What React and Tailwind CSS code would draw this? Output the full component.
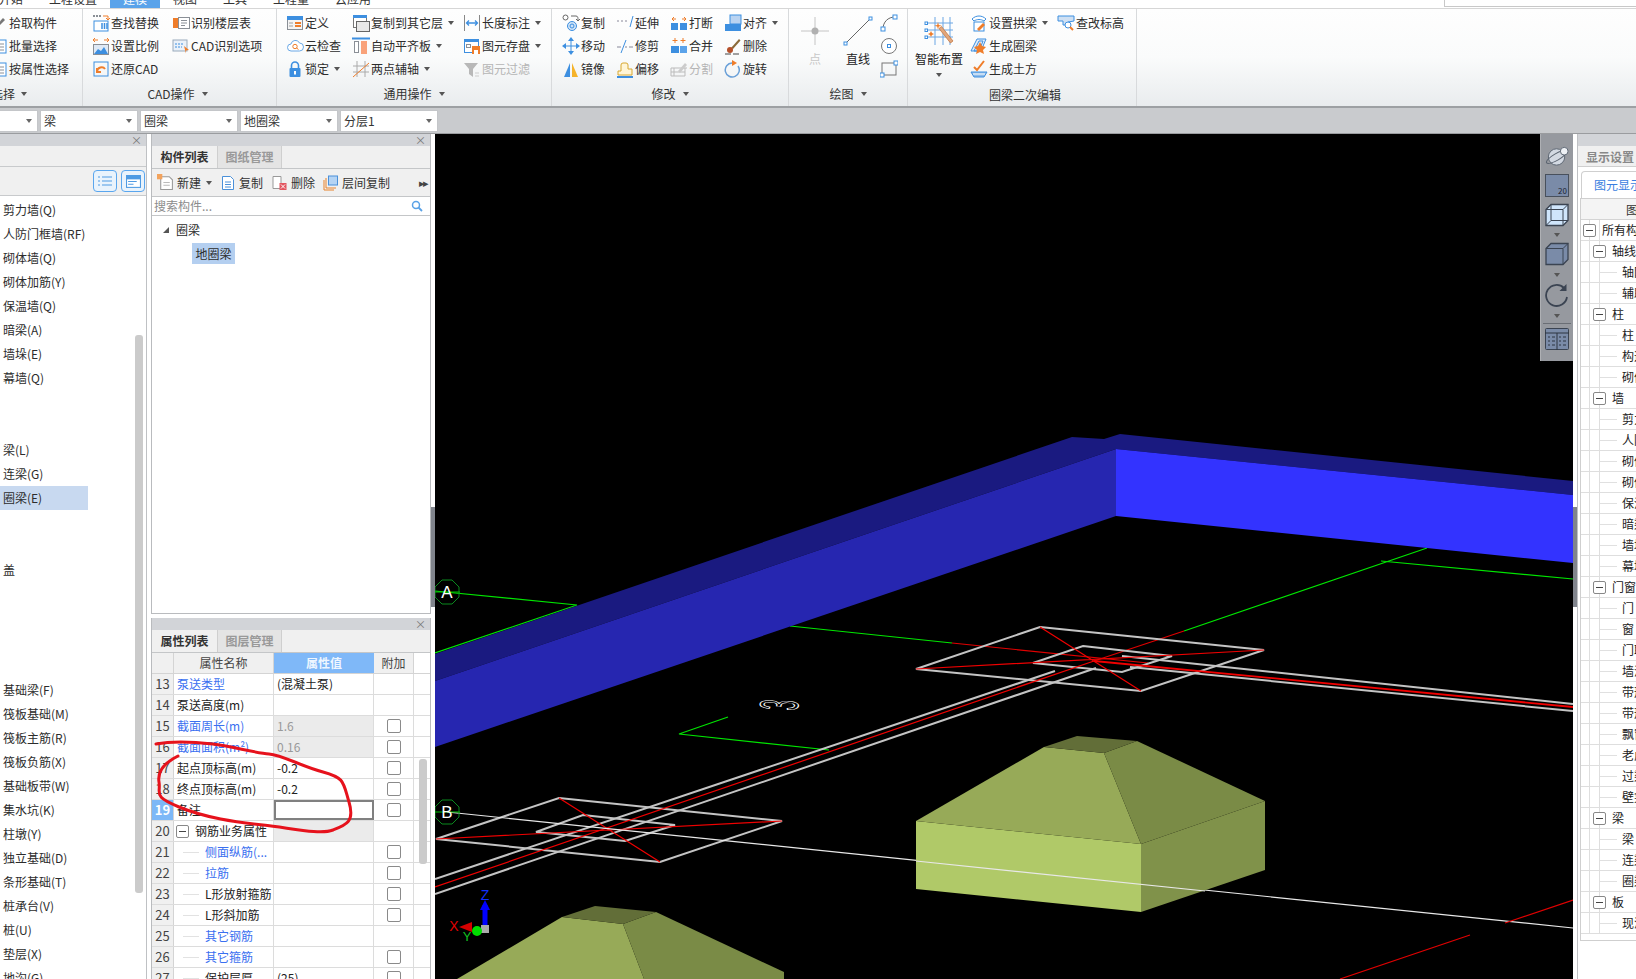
import React from "react";

const FONT = "font-['Noto_Sans_CJK_SC','Noto_Sans',sans-serif]";

const S = ({ children }) => (
  <svg viewBox="0 0 18 18" width="18" height="18" fill="none" className="block shrink-0">{children}</svg>
);
const B = "#3d8fe0";
const O = "#ef7d2a";
const G = "#8a8f96";

const Icons = {
  pick: <S><path d="M3 15 L13 4 L15 6 L5 16Z" fill="#777" /></S>,
  doc: <S><rect x="3" y="3" width="13" height="13" fill="#fff" stroke={B} /><path d="M6 7h8M6 10h8M6 13h8" stroke={G} /></S>,
  find: <S><path d="M1 2h2M4 2h2M7 2h2" stroke={G} strokeWidth="2" /><path d="M11 2h5v3M14 4l2 2 2-2" stroke={O} /><rect x="2" y="7" width="14" height="10" fill="#fff" stroke={B} /><path d="M10 9v6M12.500 9v6M15 9v6" stroke={B} strokeWidth="1.500" /></S>,
  scale: <S><path d="M1 3h5M1 3l2-2M1 3l2 2M17 3h-5M17 3l-2-2M17 3l-2 2" stroke={O} /><rect x="1.500" y="7.500" width="15" height="10" fill="#dfe9f5" stroke={G} /><path d="M2 17l4-5 3 2 3-4 4 7z" fill={B} /></S>,
  restore: <S><rect x="2" y="2" width="14" height="14" stroke={B} /><path d="M5 12c0-5 6-6 8-3M5 8v4h4" stroke={O} strokeWidth="2" /></S>,
  floors: <S><rect x="1" y="4" width="7" height="10" fill={O} /><rect x="6.500" y="3.500" width="11" height="11" fill="#fff" stroke={G} /><path d="M9 6.500h6M9 9h6M9 11.500h4" stroke={G} /></S>,
  cad: <S><rect x="1" y="3" width="14" height="11" fill="#eaf1f9" stroke="#9ab" /><path d="M3 7h9M3 10h7" stroke={B} strokeDasharray="2 1" /><path d="M12 9l5 4-3 .5 0 3z" fill={O} /></S>,
  define: <S><rect x="1.500" y="2.500" width="15" height="13" fill="#f4f4f4" stroke={G} /><rect x="1" y="2" width="16" height="4" fill={B} /><path d="M9 9h6M9 12h6" stroke={O} strokeWidth="2" /><path d="M3 9h4M3 12h4" stroke="#bbb" strokeWidth="1.500" /></S>,
  cloud: <S><path d="M5 14a3.500 3.500 0 0 1 0-7 4.500 4.500 0 0 1 8.500-1 4 4 0 0 1 0 8z" fill="#fff" stroke="#6aa8e6" /><circle cx="9" cy="9.500" r="2.200" stroke={O} /><path d="M10.500 11l2 1.500" stroke={O} /></S>,
  lock: <S><path d="M5.500 8V5.500a3.500 3.500 0 0 1 7 0V8" stroke={B} strokeWidth="1.600" /><rect x="3.500" y="8" width="11" height="9" rx="1" fill={B} /><rect x="8" y="11" width="2" height="3.500" fill="#fff" /></S>,
  copyto: <S><rect x="1.500" y="1.500" width="13" height="12" fill="#fff" stroke="#777" /><rect x="1" y="1" width="14" height="3" fill={B} /><rect x="4.500" y="7.500" width="13" height="10" fill="#e8e8e8" stroke="#666" /></S>,
  align2: <S><path d="M0 1.500h18" stroke={B} strokeWidth="2" /><rect x="2.500" y="4.500" width="4" height="11" fill="#fff" stroke={G} /><rect x="9" y="4" width="6" height="13" fill="#f9a27a" /></S>,
  axis2: <S><path d="M5 1v16M13 1v16M1 6h16M1 12h16" stroke="#aaa" /><path d="M1 17L17 3" stroke={O} /></S>,
  dim: <S><path d="M1.500 1v16M16.500 1v16" stroke="#888" /><path d="M4 9h10M6 6.500L3.500 9 6 11.500M12 6.500L14.500 9 12 11.500" stroke={B} strokeWidth="1.300" /></S>,
  save: <S><rect x="1.500" y="2.500" width="14" height="13" fill="#fff" stroke={B} /><rect x="1" y="2" width="15" height="3" fill={B} /><rect x="3.500" y="7.500" width="4" height="3" stroke={G} /><rect x="9" y="9" width="8" height="8" fill={O} /><rect x="11" y="13" width="4" height="4" fill="#fff" /></S>,
  filter: <S><path d="M1 3h14L10 9v8L6 14V9z" fill="#b8b8b8" /><path d="M12 13h4M12 16h4" stroke="#ccc" /></S>,
  copy: <S><circle cx="3.500" cy="3.500" r="2.500" fill="#fff" stroke="#666" /><circle cx="10" cy="12" r="4.500" fill="#cfe3f7" stroke={B} /><circle cx="10" cy="12" r="2" stroke={B} /><path d="M9 2h5c2 0 2 2 2 4M14 5l2 2 2-2" stroke="#666" /></S>,
  extend: <S><path d="M1 7h2M5 7h2M9 7h2" stroke="#889" /><path d="M14 13l3-11" stroke={B} /></S>,
  breakI: <S><path d="M2 5h4M2 5l2-2M2 5l2 2M16 5h-4M16 5l-2-2M16 5l-2 2" stroke={O} /><rect x="1" y="9" width="7" height="7" fill={B} /><rect x="10" y="9" width="7" height="7" fill={B} /></S>,
  alignI: <S><rect x="6" y="1" width="11" height="9" fill="#b9d3f1" stroke={B} /><rect x="1" y="10" width="16" height="7" fill={B} /></S>,
  move: <S><path d="M9 3v12M3 9h12" stroke={B} /><path d="M9 0l3 4H6zM9 18l3-4H6zM0 9l4-3v6zM18 9l-4-3v6z" fill={B} /></S>,
  trim: <S><path d="M1 10h4M9 10h2M13 10h4" stroke="#889" /><path d="M5 16L10 3" stroke={B} /></S>,
  merge: <S><path d="M5 1v5M2.500 3.500h5M13 1v5M10.500 3.500h5" stroke={O} /><rect x="1" y="9" width="8" height="7" fill={B} /><rect x="10" y="9" width="7" height="7" fill="#5ba3ea" /></S>,
  del: <S><path d="M7 11L15 2l1.500 1.500L9 12z" fill="#8a6a3a" /><circle cx="6" cy="13" r="3" fill="#b5502a" /><path d="M1 17h6M9 17h6" stroke="#444" /></S>,
  mirror: <S><path d="M8 3v14H2z" fill={B} /><path d="M10 3v14h6z" fill="#f5b32a" /></S>,
  offset: <S><path d="M2 15v-4h3V5a2 2 0 0 1 2-2h3a2 2 0 0 1 2 2v4h4v6z" fill="#fff5d6" stroke="#d8a830" /><path d="M1 17h16" stroke={B} strokeWidth="2" /></S>,
  split: <S><path d="M1 8h13l3 0M1 8v8h14V8M4 8v8M1 12h14" stroke="#bbb" /><path d="M8 11l7-8 2 2-7 8z" fill="#ccc" /></S>,
  rotate: <S><path d="M8 3a7 7 0 1 0 6 3" stroke="#6aa0d8" strokeWidth="1.500" /><path d="M8 0v6l5-3z" fill={O} /></S>,
  arc: <S><path d="M3 15C3 8 8 3 15 3" stroke="#666" /><rect x="1" y="13" width="4" height="4" fill="#fff" stroke={B} /><rect x="13" y="1" width="4" height="4" fill="#fff" stroke={B} /></S>,
  circle: <S><circle cx="9" cy="9" r="7.500" stroke="#777" fill="#fff" /><rect x="7.500" y="7.500" width="3" height="3" fill="#fff" stroke={B} /></S>,
  rect: <S><rect x="2" y="3" width="14" height="12" stroke="#777" /><rect x="0" y="13" width="4" height="4" fill="#fff" stroke={B} /><rect x="14" y="1" width="4" height="4" fill="#fff" stroke={B} /></S>,
  arch: <S><path d="M2 5c4-4 10-4 14 0l-2 2c-3-2-7-2-10 0z" fill="#fff" stroke={B} /><rect x="4" y="8" width="10" height="9" fill="#fff" stroke={B} /><path d="M7 15l6-6 2 2-6 6z" fill={O} /></S>,
  ring: <S><path d="M1 14L7 2h9l-5 12zM4 14l5-10h4l-4 10z" stroke={B} fill="#e4eefa" /><path d="M10 5l2 4 4 1-3 3 1 4-4-2-4 2 1-4-3-3 4-1z" fill={O} /></S>,
  earth: <S><path d="M4 7l3 3 7-9" stroke={O} strokeWidth="2" /><path d="M1 12h16l-3 5H4z" fill="#8fbce9" stroke={B} /><path d="M3 14h12" stroke="#fff" /></S>,
  elev: <S><path d="M1 2h16v5l-6 1v3H6V7H1z" fill="#cfe0f3" stroke={B} /><circle cx="11" cy="11" r="3" fill="#fff" stroke={B} /><path d="M13 13l3 3" stroke={O} strokeWidth="2" /></S>,
  search: <svg viewBox="0 0 12 12" width="12" height="12" fill="none" className="block"><circle cx="5" cy="5" r="3.500" stroke="#5aa2e6" strokeWidth="1.500" /><path d="M7.500 7.500L11 11" stroke="#5aa2e6" strokeWidth="1.800" /></svg>,
};

const Caret = ({ cls = "ml-[5px]" }) => (
  <span className={"inline-block w-0 h-0 shrink-0 border-x-[3.5px] border-x-transparent border-t-[4px] border-t-[#555] " + cls} />
);

const Item = ({ icon, label, caret, gray }) => (
  <div className="flex items-center h-[23px] whitespace-nowrap">
    <span className="w-[19px] shrink-0">{Icons[icon]}</span>
    <span className={gray ? "text-[#b5b5b5]" : "text-[#2c2c2c]"}>{label}</span>
    {caret && <Caret />}
  </div>
);

const GroupLabel = ({ text, caret = true, cls = "" }) => (
  <div className={"flex items-center justify-center h-[16px] leading-[16px] whitespace-nowrap text-[#333] " + cls}>
    <span>{text}</span>
    {caret && <Caret cls="ml-[7px]" />}
  </div>
);

const Ribbon = () => (
  <div className="flex h-[98px] bg-gradient-to-b from-[#fefefe] via-[#fafbfb] to-[#e9ecee] border-t border-[#d6d6d6] text-[12px] leading-[16px]">
    <div className="w-[83px] shrink-0 pt-[2px] overflow-hidden border-r border-[#d8dadc]">
      <div className="h-[75px] flex flex-col -ml-[10px]">
        <Item icon="pick" label="拾取构件" />
        <Item icon="doc" label="批量选择" />
        <Item icon="doc" label="按属性选择" />
      </div>
      <div className="flex items-center h-[16px] -ml-[9px] whitespace-nowrap text-[#333]">
        <span>选择</span>
        <Caret cls="ml-[6px]" />
      </div>
    </div>
    <div className="w-[194px] shrink-0 pt-[2px] border-r border-[#d8dadc]">
      <div className="h-[75px] flex pl-[9px]">
        <div className="w-[80px] flex flex-col">
          <Item icon="find" label="查找替换" />
          <Item icon="scale" label="设置比例" />
          <Item icon="restore" label="还原CAD" />
        </div>
        <div className="flex flex-col">
          <Item icon="floors" label="识别楼层表" />
          <Item icon="cad" label="CAD识别选项" />
        </div>
      </div>
      <GroupLabel text="CAD操作" cls="pr-[4px]" />
    </div>
    <div className="w-[275px] shrink-0 pt-[2px] border-r border-[#d8dadc]">
      <div className="h-[75px] flex pl-[9px]">
        <div className="w-[66px] flex flex-col">
          <Item icon="define" label="定义" />
          <Item icon="cloud" label="云检查" />
          <Item icon="lock" label="锁定" caret />
        </div>
        <div className="w-[111px] flex flex-col">
          <Item icon="copyto" label="复制到其它层" caret />
          <Item icon="align2" label="自动平齐板" caret />
          <Item icon="axis2" label="两点辅轴" caret />
        </div>
        <div className="flex flex-col">
          <Item icon="dim" label="长度标注" caret />
          <Item icon="save" label="图元存盘" caret />
          <Item icon="filter" label="图元过滤" gray />
        </div>
      </div>
      <GroupLabel text="通用操作" />
    </div>
    <div className="w-[237px] shrink-0 pt-[2px] border-r border-[#d8dadc]">
      <div className="h-[75px] flex pl-[10px]">
        <div className="w-[54px] flex flex-col">
          <Item icon="copy" label="复制" />
          <Item icon="move" label="移动" />
          <Item icon="mirror" label="镜像" />
        </div>
        <div className="w-[54px] flex flex-col">
          <Item icon="extend" label="延伸" />
          <Item icon="trim" label="修剪" />
          <Item icon="offset" label="偏移" />
        </div>
        <div className="w-[54px] flex flex-col">
          <Item icon="breakI" label="打断" />
          <Item icon="merge" label="合并" />
          <Item icon="split" label="分割" gray />
        </div>
        <div className="flex flex-col">
          <Item icon="alignI" label="对齐" caret />
          <Item icon="del" label="删除" />
          <Item icon="rotate" label="旋转" />
        </div>
      </div>
      <GroupLabel text="修改" />
    </div>
    <div className="w-[119px] shrink-0 pt-[2px] border-r border-[#d8dadc]">
      <div className="h-[75px] flex pl-[5px]">
        <div className="w-[42px] flex flex-col items-center pt-[5px]">
          <svg viewBox="0 0 30 30" width="30" height="30" fill="none" className="block"><path d="M15 1v28M1 15h28" stroke="#c4c4c4" /><circle cx="15" cy="15" r="3.500" fill="#b0b0b0" /></svg>
          <span className="text-[#c8c8c8] mt-[5px]">点</span>
        </div>
        <div className="w-[44px] flex flex-col items-center pt-[5px]">
          <svg viewBox="0 0 30 30" width="30" height="30" fill="none" className="block"><path d="M3 27L27 3" stroke="#666" /><rect x="1" y="26" width="3" height="3" fill="#fff" stroke={B} /><rect x="26" y="1" width="3" height="3" fill="#fff" stroke={B} /></svg>
          <span className="text-[#222] mt-[5px]">直线</span>
        </div>
        <div className="flex flex-col">
          <div className="h-[23px] flex items-center">{Icons.arc}</div>
          <div className="h-[23px] flex items-center">{Icons.circle}</div>
          <div className="h-[23px] flex items-center">{Icons.rect}</div>
        </div>
      </div>
      <GroupLabel text="绘图" />
    </div>
    <div className="w-[229px] shrink-0 pt-[2px] border-r border-[#d8dadc]">
      <div className="h-[75px] flex">
        <div className="w-[62px] flex flex-col items-center pt-[5px]">
          <svg viewBox="0 0 30 30" width="30" height="30" fill="none" className="block">
            <path d="M3 7h26M3 14h26M3 21h26M11 1v28M19 1v28M26 1v28" stroke="#6ba6e4" />
            <rect x="1" y="6" width="2.500" height="2.500" fill="#fff" stroke={B} /><rect x="1" y="13" width="2.500" height="2.500" fill="#fff" stroke={B} /><rect x="1" y="20" width="2.500" height="2.500" fill="#fff" stroke={B} />
            <path d="M15 12.500l2.500-2L29 25l-2.500 2z" fill="#e2a77c" stroke="#c0703a" strokeWidth=".7" />
            <path d="M14 6l.8 3 3 .8-3 .8-.8 3-.8-3-3-.8 3-.8z" fill={O} />
            <path d="M8 17l2 1-2 1-1 2-1-2-2-1 2-1 1-2z" fill={O} />
          </svg>
          <span className="text-[#222] mt-[5px]">智能布置</span>
          <Caret cls="mt-[6px]" />
        </div>
        <div className="w-[87px] flex flex-col">
          <Item icon="arch" label="设置拱梁" caret />
          <Item icon="ring" label="生成圈梁" />
          <Item icon="earth" label="生成土方" />
        </div>
        <div className="flex flex-col">
          <Item icon="elev" label="查改标高" />
        </div>
      </div>
      <GroupLabel text="圈梁二次编辑" caret={false} cls="pl-[6px] pt-[1px]" />
    </div>
  </div>
);

const Tabs = () => (
  <div className="relative h-[8px] bg-white overflow-hidden text-[12px] leading-[16px] text-[#333]">
    <div className="flex items-end h-full -ml-[14px] whitespace-nowrap">
      <span className="px-[13px] shrink-0 pb-[1px]">开始</span>
      <span className="px-[13px] shrink-0 pb-[1px]">工程设置</span>
      <span className="px-[13px] shrink-0 pb-[1px] bg-[#5aa3ea] text-white">建模</span>
      <span className="px-[13px] shrink-0 pb-[1px]">视图</span>
      <span className="px-[13px] shrink-0 pb-[1px]">工具</span>
      <span className="px-[13px] shrink-0 pb-[1px]">工程量</span>
      <span className="px-[13px] shrink-0 pb-[1px]">云应用</span>
    </div>
    <div className="absolute left-[1444px] right-0 top-0 h-[7px] border-l border-b border-[#c8c8c8]" />
  </div>
);

const Dropdown = ({ label, cls }) => (
  <div className={"h-[22px] bg-white border border-[#c4c6c9] flex items-center justify-between pl-[3px] pr-[5px] text-[12px] leading-[16px] text-[#333] " + cls}>
    <span>{label}</span>
    <span className="w-0 h-0 border-x-[3px] border-x-transparent border-t-[4px] border-t-[#666]" />
  </div>
);

const DropBar = () => (
  <div className="h-[28px] bg-[#c9cbce] border-t-2 border-[#9da0a3] border-b border-b-[#9a9c9f] pt-[2px] flex gap-[2px]">
    <Dropdown label="" cls="w-[38px] border-l-0" />
    <Dropdown label="梁" cls="w-[98px]" />
    <Dropdown label="圈梁" cls="w-[98px]" />
    <Dropdown label="地圈梁" cls="w-[98px]" />
    <Dropdown label="分层1" cls="w-[98px]" />
  </div>
);

const PanelHead = () => (
  <div className="h-[12px] bg-[#d2d4d8] flex items-center justify-end pr-[4px] text-[11px] leading-[12px] text-[#777] shrink-0">×</div>
);

const TabRow = ({ a, b }) => (
  <div className="h-[23px] bg-[#f0f0f0] border-b border-[#c4c6c8] flex shrink-0 text-[12px]">
    <div className="w-[65px] font-bold text-[#333] flex items-center justify-center">{a}</div>
    <div className="w-[65px] font-bold text-[#999] bg-[#e4e4e4] border-x border-[#cfcfcf] flex items-center justify-center">{b}</div>
  </div>
);

const leftRows = ["剪力墙(Q)", "人防门框墙(RF)", "砌体墙(Q)", "砌体加筋(Y)", "保温墙(Q)", "暗梁(A)", "墙垛(E)", "幕墙(Q)", "", "", "梁(L)", "连梁(G)", "圈梁(E)", "", "", "盖", "", "", "", "", "基础梁(F)", "筏板基础(M)", "筏板主筋(R)", "筏板负筋(X)", "基础板带(W)", "集水坑(K)", "柱墩(Y)", "独立基础(D)", "条形基础(T)", "桩承台(V)", "桩(U)", "垫层(X)", "地沟(G)"];

const LeftPanel = () => (
  <div className="w-[147px] shrink-0 flex flex-col border-r border-[#bfc1c4] overflow-hidden">
    <PanelHead />
    <div className="h-[21px] bg-[#f0f0f0] border-b border-[#c8cacc] shrink-0" />
    <div className="h-[29px] bg-[#f0f0f0] border-b border-[#c8cacc] shrink-0 flex items-center justify-end gap-[4px] pr-[1px]">
      <div className="w-[24px] h-[22px] rounded-[4px] border border-[#5aa6ee] bg-[#e9f3fc] flex items-center justify-center">
        <svg viewBox="0 0 14 12" width="14" height="12" fill="none"><path d="M0 2h2M0 6h2M0 10h2M4 2h10M4 6h10M4 10h10" stroke="#4f9be3" /></svg>
      </div>
      <div className="w-[24px] h-[22px] rounded-[4px] border border-[#5aa6ee] bg-[#e9f3fc] flex items-center justify-center">
        <svg viewBox="0 0 14 12" width="15" height="13" fill="none"><rect x=".5" y=".5" width="13" height="11" fill="#fff" stroke="#4f9be3" /><rect x="0" y="0" width="14" height="4" fill="#4f9be3" /><path d="M2 6h8M2 8.500h5" stroke="#4f9be3" /></svg>
      </div>
    </div>
    <div className="flex-1 relative bg-white pt-[2px] overflow-hidden text-[12px] text-[#2c2c2c]">
      {leftRows.map((r, i) => (
        <div key={i} className={"h-[24px] leading-[24px] pl-[3px] whitespace-nowrap w-[88px] " + (r === "圈梁(E)" ? "bg-[#c8d9f0]" : "")}>{r}</div>
      ))}
      <div className="absolute right-[3px] top-[139px] w-[8px] h-[558px] rounded-[3px] bg-[#cbcbcb]" />
    </div>
  </div>
);

const Tool = ({ children, label, caret }) => (
  <div className="flex items-center gap-[3px] whitespace-nowrap">
    {children}
    <span className="text-[#333]">{label}</span>
    {caret && <Caret cls="ml-[2px]" />}
  </div>
);

const ComponentPanel = () => (
  <div className="h-[480px] shrink-0 flex flex-col border-x border-b border-[#b9bbbe]">
    <PanelHead />
    <TabRow a="构件列表" b="图纸管理" />
    <div className="h-[28px] bg-[#f0f0f0] border-b border-[#c4c6c8] shrink-0 flex items-center pl-[5px] gap-[8px] text-[12px] relative">
      <Tool label="新建" caret>
        <svg viewBox="0 0 16 16" width="17" height="17" fill="none"><path d="M3.500 2.500h8l3 3v9h-11z" fill="#fff" stroke="#999" /><path d="M6 8h6M6 10.500h6" stroke="#bbb" /><rect x="0" y="0" width="5" height="5" fill="#f3a35d" /></svg>
      </Tool>
      <Tool label="复制">
        <svg viewBox="0 0 16 16" width="16" height="16" fill="none"><path d="M2.500 1.500h8l3 3v10h-11z" fill="#fff" stroke="#4a90d9" /><path d="M5 7h6M5 9.500h6M5 12h6" stroke="#4a90d9" /></svg>
      </Tool>
      <Tool label="删除">
        <svg viewBox="0 0 16 16" width="17" height="16" fill="none"><path d="M1.500 1.500h8v12h-8z" fill="#fff" stroke="#999" /><rect x="8" y="8" width="7" height="7" fill="#e2555f" /><path d="M9.500 9.500l4 4M13.500 9.500l-4 4" stroke="#fff" /></svg>
      </Tool>
      <Tool label="层间复制">
        <svg viewBox="0 0 16 16" width="16" height="16" fill="none"><path d="M1 5v10h10" stroke="#e8832c" /><path d="M3 3v10h10" stroke="#e8832c" /><rect x="5.500" y="1" width="9" height="9" fill="#b5d4f4" stroke="#4a90d9" /></svg>
      </Tool>
      <span className="absolute right-[3px] text-[11px] text-[#444] tracking-[-2px]">▸▸</span>
    </div>
    <div className="h-[19px] bg-white border-b border-[#c4c6c8] shrink-0 flex items-center justify-between pl-[2px] pr-[7px] text-[12px] text-[#8c8c8c]">
      <span>搜索构件...</span>
      {Icons.search}
    </div>
    <div className="flex-1 bg-white text-[12px] text-[#2c2c2c]">
      <div className="flex items-center h-[18px] mt-[5px] pl-[11px]">
        <span className="w-0 h-0 border-l-[6px] border-l-transparent border-b-[6px] border-b-[#555]" />
        <span className="ml-[7px]">圈梁</span>
      </div>
      <div className="ml-[40px] mt-[4px] w-[43px] h-[21px] leading-[21px] text-center bg-[#b4cff0]">地圈梁</div>
    </div>
  </div>
);

const Check = () => <span className="w-[14px] h-[14px] rounded-[2px] border border-[#8a8a8a] bg-white block" />;

const Box = () => (
  <span className="w-[13px] h-[13px] rounded-[2px] border border-[#888] bg-white shrink-0 flex items-center justify-center">
    <span className="w-[7px] h-px bg-[#444]" />
  </span>
);

const props = [
  { n: 13, name: "泵送类型", val: "(混凝土泵)", blue: true },
  { n: 14, name: "泵送高度(m)" },
  { n: 15, name: "截面周长(m)", val: "1.6", blue: true, check: true, dim: true },
  { n: 16, name: "截面面积(m²)", val: "0.16", blue: true, check: true, dim: true },
  { n: 17, name: "起点顶标高(m)", val: "-0.2", check: true },
  { n: 18, name: "终点顶标高(m)", val: "-0.2", check: true },
  { n: 19, name: "备注", check: true, active: true },
  { n: 20, name: "钢筋业务属性", group: true },
  { n: 21, name: "侧面纵筋(...", blue: true, check: true, child: true },
  { n: 22, name: "拉筋", blue: true, check: true, child: true },
  { n: 23, name: "L形放射箍筋", check: true, child: true },
  { n: 24, name: "L形斜加筋", check: true, child: true },
  { n: 25, name: "其它钢筋", blue: true, child: true },
  { n: 26, name: "其它箍筋", blue: true, check: true, child: true },
  { n: 27, name: "保护层厚", val: "(25)", check: true, child: true },
];

const PropRow = ({ p }) => (
  <div className="flex h-[21px] border-b border-[#dcdcdc] text-[12px] leading-[20px]">
    <div className={"w-[22px] shrink-0 text-center border-r border-[#d4d4d4] text-[13px] " + (p.active ? "bg-[#7db8f7] text-white font-bold" : "bg-[#f0f0f0] text-[#444]")}>{p.n}</div>
    <div className={"w-[100px] shrink-0 border-r border-[#dcdcdc] whitespace-nowrap flex items-center " + (p.blue ? "text-[#3a6ff0] " : "text-[#222] ") + (p.group ? "pl-[2px]" : p.child ? "pl-[9px]" : "pl-[3px]")}>
      {p.group && <><Box /><span className="ml-[6px]">{p.name}</span></>}
      {p.child && <><span className="w-[16px] h-px bg-[#e2e2e2] mr-[6px] shrink-0" /><span>{p.name}</span></>}
      {!p.group && !p.child && p.name}
    </div>
    {p.active ? (
      <div className="w-[100px] shrink-0 border-2 border-[#808080]" />
    ) : (
      <div className={"w-[100px] shrink-0 border-r border-[#dcdcdc] pl-[3px] " + (p.dim || p.group ? "bg-[#ebebeb] text-[#999]" : "text-[#222]")}>{p.val}</div>
    )}
    <div className="w-[40px] shrink-0 border-r border-[#dcdcdc] flex items-center justify-center">{p.check && <Check />}</div>
  </div>
);

const PropPanel = () => (
  <div className="relative flex-1 flex flex-col border-x border-[#b9bbbe] overflow-hidden">
    <PanelHead />
    <TabRow a="属性列表" b="图层管理" />
    <div className="flex-1 bg-white relative overflow-hidden">
      <div className="flex h-[21px] text-[12px] border-b border-[#d4d4d4]">
        <div className="w-[22px] bg-[#f0f0f0] border-r border-[#d4d4d4]" />
        <div className="w-[100px] bg-[#f0f0f0] border-r border-[#d4d4d4] text-center leading-[20px] text-[#444]">属性名称</div>
        <div className="w-[100px] bg-[#7fb8f8] text-center leading-[20px] font-bold text-[#eef6ff]">属性值</div>
        <div className="w-[40px] bg-[#f0f0f0] border-r border-[#d4d4d4] text-center leading-[20px] text-[#444]">附加</div>
      </div>
      {props.map((p) => <PropRow key={p.n} p={p} />)}
      <div className="absolute left-[267px] top-[106px] w-[8px] h-[105px] rounded-[3px] bg-[#cbcbcb]" />
    </div>
    <svg className="absolute left-0 top-0 pointer-events-none" width="280" height="360" viewBox="151 619 280 360" fill="none">
      <path d="M155 745 C170 742 195 743 212 745 S255 754 268 755 S300 767 322 773 S342 783 348 803 S345 826 332 831 S290 829 262 826 S205 819 178 808 S160 795 158 783 S165 763 177 757" stroke="#e6121c" strokeWidth="3" strokeLinecap="round" strokeLinejoin="round" />
    </svg>
  </div>
);

const Octagon = ({ x, y, t }) => (
  <g>
    <polygon points={`${x - 5},${y - 12} ${x + 5},${y - 12} ${x + 12},${y - 5} ${x + 12},${y + 5} ${x + 5},${y + 12} ${x - 5},${y + 12} ${x - 12},${y + 5} ${x - 12},${y - 5}`} stroke="#0a8a1e" />
    <path d={`M${x - 12} ${y}h25`} stroke="#00c000" />
    <text x={x} y={y + 6} textAnchor="middle" fill="#fff" fontSize="17" fontFamily="'Liberation Sans',sans-serif">{t}</text>
  </g>
);

const Scene = () => (
  <svg className="block absolute inset-0" width="1138" height="845" viewBox="435 134 1138 845" fill="none">
    <rect x="435" y="134" width="1138" height="845" fill="#000" />
    {/* axes */}
    <path d="M435 591L577 605L435 653" stroke="#00e600" strokeWidth="1.200" />
    <path d="M790 626L952 643" stroke="#00e600" strokeWidth="1.200" />
    <path d="M728 717L679 734L829 750" stroke="#00e600" strokeWidth="1.200" />
    <path d="M1427 548L1184 631M1381 561L1573 579" stroke="#00e600" strokeWidth="1.200" />
    <path d="M952 643L1148 663" stroke="#e00000" strokeWidth="1.200" />
    <path d="M1184 631L1094 661" stroke="#e00000" strokeWidth="1.200" />
    {/* beam */}
    <polygon points="435,654 1072,437 1104,439 1120,434 1573,481 1573,495 1116,449 435,681" fill="#1a1a80" />
    <polygon points="435,681 1116,449 1116,516 435,747" fill="#2626b0" />
    <polygon points="1116,449 1573,495 1573,563 1116,516" fill="#3333ff" />
    {/* strips */}
    <g stroke="#c4c4c4" strokeWidth="2">
      <path d="M435 879L1055 671M435 894L1096 668" />
      <path d="M1122 656L1573 704M1130 667L1573 711" />
      <path d="M1040 627L1264 650L1141 691L916 669Z" />
      <path d="M1083 646L1172 656L1122 672L1033 663Z" />
      <path d="M559 798L782 821L660 862L436 839Z" />
      <path d="M583 815L675 825L625 841L536 832Z" />
    </g>
    <g stroke="#f00000" strokeWidth="1.200">
      <path d="M435 887L1094 661" />
      <path d="M1094 661L1573 707" strokeWidth="1.800" />
      <path d="M1040 627L1141 691M916 669L1264 650" />
      <path d="M559 798L660 862M436 839L782 821" />
    </g>
    <path d="M447 812L1573 928" stroke="#e8e8e8" strokeWidth="1.200" />
    <Octagon x={447} y={592} t="A" />
    <Octagon x={447} y={812} t="B" />
    <text transform="matrix(0.1 -0.6 1.8 0.1 797 711)" fill="none" stroke="#fff" strokeWidth="0.700" fontSize="30" fontFamily="'Liberation Sans',sans-serif">3</text>
    {/* right footing */}
    <polygon points="916,821 1141,844 1141,912 916,889" fill="#b0c968" />
    <polygon points="1141,844 1265,801 1265,870 1141,912" fill="#80924a" />
    <polygon points="916,821 1044,747 1104,753 1141,844" fill="#97aa58" />
    <polygon points="1104,753 1137,741 1265,801 1141,844" fill="#7a8b46" />
    <polygon points="1044,747 1077,736 1137,741 1104,753" fill="#626e38" />
    <path d="M916 861L1205 891" stroke="#e8e8e8" strokeWidth="1.200" />
    {/* left footing */}
    <polygon points="562,917 623,924 644,979 457,979" fill="#97aa58" />
    <polygon points="623,924 656,912 784,972 784,979 644,979" fill="#7a8b46" />
    <polygon points="562,917 595,906 656,912 623,924" fill="#626e38" />
    <path d="M1340 979L1470 935M1505 923L1573 900" stroke="#e00000" strokeWidth="1.200" />
    {/* gizmo */}
    <text x="485" y="900" textAnchor="middle" fill="#1030ff" fontSize="14" fontFamily="'Liberation Sans',sans-serif">Z</text>
    <path d="M485 905V926" stroke="#0000ff" strokeWidth="5" />
    <polygon points="485,900 480,910 490,910" fill="#0000ff" />
    <rect x="481" y="925" width="8" height="8" fill="#aaa" />
    <text x="454" y="931" textAnchor="middle" fill="#e00000" fontSize="14" fontFamily="'Liberation Sans',sans-serif">X</text>
    <polygon points="459,927 472,922 472,932" fill="#d40000" />
    <text x="467" y="941" textAnchor="middle" fill="#10c020" fontSize="13" fontFamily="'Liberation Sans',sans-serif">Y</text>
    <circle cx="477" cy="931" r="5" fill="#00dd00" />
  </svg>
);

const ViewTools = () => (
  <div className="absolute right-0 top-0 w-[33px] h-[227px] bg-[#96999f] border-l border-[#aeb0b4] flex flex-col items-center pt-[12px]">
    <svg viewBox="0 0 26 20" width="25" height="20" fill="none" className="block">
      <circle cx="12" cy="11" r="8.500" fill="#d3d9e2" stroke="#5b6470" />
      <ellipse cx="12" cy="11" rx="12" ry="3.500" transform="rotate(-30 12 11)" stroke="#5b6470" />
      <circle cx="20" cy="5" r="4" fill="#eef1f5" stroke="#5b6470" />
    </svg>
    <div className="mt-[8px] w-[24px] h-[23px] bg-[#7a8ba8] border border-[#48505c] flex items-end justify-end pr-[1px] text-[8px] leading-[10px] text-[#1c2430]">20</div>
    <svg viewBox="0 0 24 24" width="24" height="24" fill="none" className="block mt-[6px]">
      <path d="M1 6.500L6 1.500h17v16l-5 5H1z" fill="#cfe5fb" stroke="#3b4452" strokeWidth="1.300" />
      <path d="M1 6.500h17v16M18 6.500l5-5M6 1.500v16h17M6 17.500l-5 5" stroke="#3b4452" />
    </svg>
    <Caret cls="mt-[6px] mb-[5px] border-t-[#3b4452]" />
    <svg viewBox="0 0 24 24" width="24" height="24" fill="none" className="block">
      <path d="M1 6.500L6 1.500h17v16l-5 5H1z" fill="#7a8ba8" stroke="#3b4452" strokeWidth="1.300" />
      <path d="M1 6.500h17v16M18 6.500l5-5" stroke="#3b4452" />
    </svg>
    <Caret cls="mt-[7px] mb-[6px] border-t-[#3b4452]" />
    <svg viewBox="0 0 24 24" width="24" height="24" fill="none" className="block">
      <path d="M19 5A10.500 10.500 0 1 0 22 14" stroke="#3b4452" strokeWidth="1.800" />
      <path d="M21.500 1v7h-7z" fill="#3b4452" />
    </svg>
    <Caret cls="mt-[7px] mb-[5px] border-t-[#3b4452]" />
    <div className="w-[28px] h-px bg-[#6a6e75] mb-[4px]" />
    <svg viewBox="0 0 24 22" width="24" height="22" fill="none" className="block">
      <rect x=".5" y=".5" width="23" height="21" rx="1" fill="#7a8ba8" stroke="#3b4452" />
      <path d="M0 5h24M12 5v17M3 9h2M3 13h2M3 17h2M7 9h3M7 13h3M7 17h3M14 9h2M14 13h2M14 17h2M18 9h3M18 13h3M18 17h3" stroke="#2c3440" />
    </svg>
  </div>
);

const Splitter = () => (
  <div className="w-[4px] shrink-0 bg-white pt-[373px]">
    <div className="h-[100px] bg-[#80848c]" />
  </div>
);

const tree = [
  [0, "所有构件"], [1, "轴线"], [2, "轴网"], [2, "辅助轴线"], [1, "柱"], [2, "柱"], [2, "构造柱"], [2, "砌体柱"], [1, "墙"], [2, "剪力墙"], [2, "人防门框墙"], [2, "砌体墙"], [2, "砌体加筋"], [2, "保温墙"], [2, "暗梁"], [2, "墙垛"], [2, "幕墙"], [1, "门窗洞"], [2, "门"], [2, "窗"], [2, "门联窗"], [2, "墙洞"], [2, "带形窗"], [2, "带形洞"], [2, "飘窗"], [2, "老虎窗"], [2, "过梁"], [2, "壁龛"], [1, "梁"], [2, "梁"], [2, "连梁"], [2, "圈梁"], [1, "板"], [2, "现浇板"],
];

const TreeRow = ({ lvl, text }) => (
  <div className="flex items-center h-[21px] border-b border-[#dedede] text-[12px] text-[#222] whitespace-nowrap">
    <span className="w-[9px] h-full border-r border-[#dedede] shrink-0" />
    <span className="w-[10px] h-full border-r border-[#dedede] shrink-0" />
    {lvl === 0 && <span className="-ml-[17px] mr-[6px] z-10"><Box /></span>}
    {lvl === 1 && <span className="-ml-[7px] mr-[6px] z-10"><Box /></span>}
    {lvl === 2 && <span className="w-[17px] h-px bg-[#e0e0e0] mr-[5px] shrink-0" />}
    <span>{text}</span>
  </div>
);

const RightPanel = () => (
  <div className="w-[59px] shrink-0 overflow-hidden bg-white border-l border-[#bfc1c4]">
    <div className="w-[220px] h-full flex flex-col">
      <PanelHead />
      <div className="h-[21px] bg-[#f0f0f0] border-b border-[#cfcfcf] pl-[8px] text-[12px] leading-[21px] font-bold text-[#888] shrink-0">显示设置</div>
      <div className="h-[31px] bg-white pt-[4px] pl-[3px] shrink-0">
        <div className="h-[27px] border border-b-0 border-[#cfcfcf] rounded-t-[4px] pl-[12px] text-[12px] leading-[26px] text-[#3a7ee0]">图元显示设置</div>
      </div>
      <div className="ml-[2px] h-[743px] border border-[#cfcfcf] shrink-0 overflow-hidden">
        <div className="h-[21px] bg-[#f4f4f4] border-b border-[#d4d4d4] pl-[45px] text-[12px] leading-[21px] text-[#333]">图层构件</div>
        {tree.map((t, i) => <TreeRow key={i} lvl={t[0]} text={t[1]} />)}
      </div>
    </div>
  </div>
);

export default function App() {
  return (
    <div className={"w-[1636px] h-[979px] overflow-hidden bg-white flex flex-col " + FONT}>
      <Tabs />
      <Ribbon />
      <DropBar />
      <div className="flex-1 min-h-0 flex">
        <LeftPanel />
        <div className="w-[4px] shrink-0" />
        <div className="w-[280px] shrink-0 flex flex-col">
          <ComponentPanel />
          <div className="h-[4px] shrink-0" />
          <PropPanel />
        </div>
        <Splitter />
        <div className="relative w-[1138px] shrink-0 bg-black">
          <Scene />
          <ViewTools />
        </div>
        <Splitter />
        <RightPanel />
      </div>
    </div>
  );
}
